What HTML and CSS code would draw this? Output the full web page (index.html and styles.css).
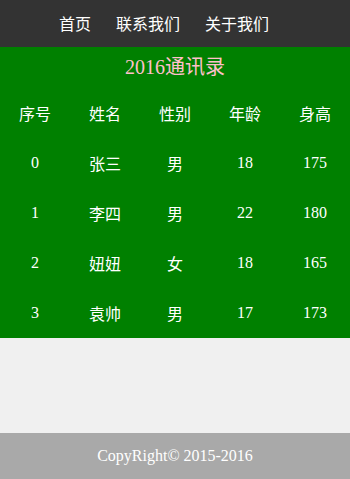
FILE: index.html
```html
<!DOCTYPE html>
<html lang="zh">
<head>
<meta charset="utf-8">
<title>2016通讯录</title>
<link rel="stylesheet" href="styles.css">
</head>
<body>
<header class="topbar">
  <nav class="nav">
    <a class="nav-item" href="#">首页</a>
    <a class="nav-item" href="#">联系我们</a>
    <a class="nav-item" href="#">关于我们</a>
  </nav>
</header>
<main class="book">
  <h1 class="book-title">2016通讯录</h1>
  <table class="contacts">
    <thead>
      <tr><th>序号</th><th>姓名</th><th>性别</th><th>年龄</th><th>身高</th></tr>
    </thead>
    <tbody>
      <tr><td class="num">0</td><td>张三</td><td>男</td><td class="num">18</td><td class="num">175</td></tr>
      <tr><td class="num">1</td><td>李四</td><td>男</td><td class="num">22</td><td class="num">180</td></tr>
      <tr><td class="num">2</td><td>妞妞</td><td>女</td><td class="num">18</td><td class="num">165</td></tr>
      <tr><td class="num">3</td><td>袁帅</td><td>男</td><td class="num">17</td><td class="num">173</td></tr>
    </tbody>
  </table>
</main>
<footer class="footer">CopyRight© 2015-2016</footer>
</body>
</html>
```

FILE: styles.css
```css
html, body {
  margin: 0;
  padding: 0;
}
body {
  background: #f0f0f0;
  font-family: "Liberation Serif", "Noto Sans CJK SC", serif;
  font-size: 16px;
  min-height: 100vh;
  display: flex;
  flex-direction: column;
}
.topbar {
  background: #333333;
  height: 47px;
  display: flex;
  align-items: center;
}
.nav {
  display: flex;
  gap: 25px;
  padding-left: 59px;
  padding-bottom: 2px;
}
.nav-item {
  color: #ffffff;
  text-decoration: none;
  font-family: "Noto Sans CJK SC", sans-serif;
  font-size: 16px;
  line-height: 20px;
}
.book {
  background: #008000;
}
.book-title {
  margin: 0;
  height: 41px;
  line-height: 41px;
  text-align: center;
  color: #ffc0cb;
  font-size: 20px;
  font-weight: normal;
}
.contacts {
  width: 100%;
  border-collapse: collapse;
  table-layout: fixed;
  color: #ffffff;
}
.contacts th,
.contacts td {
  height: 50px;
  padding: 0;
  text-align: center;
  font-size: 16px;
  font-weight: normal;
  font-family: "Noto Sans CJK SC", sans-serif;
}
.contacts td.num {
  font-family: "Liberation Serif", serif;
  font-weight: normal;
  font-size: 16px;
}
.footer {
  margin-top: auto;
  height: 46px;
  line-height: 46px;
  background: #a9a9a9;
  color: #ffffff;
  text-align: center;
  font-size: 16px;
}
```
